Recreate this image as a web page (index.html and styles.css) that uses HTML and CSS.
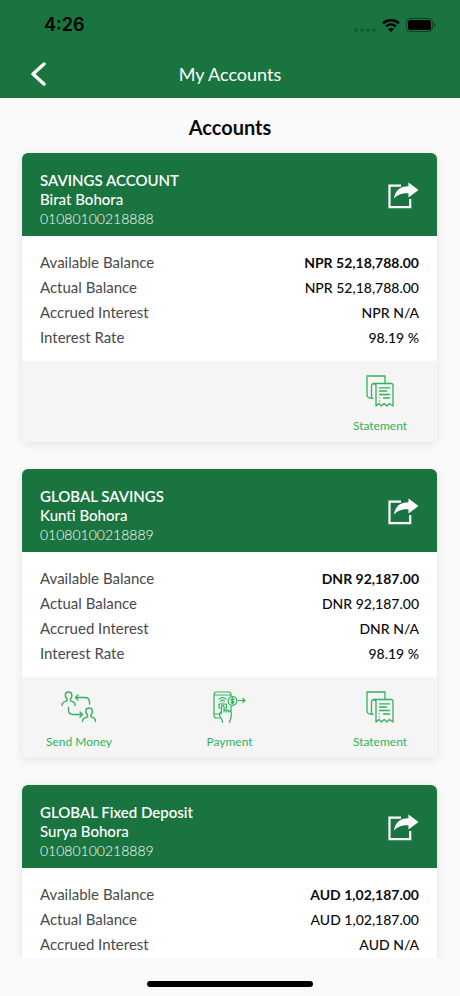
FILE: index.html
```html
<!DOCTYPE html>
<html lang="en">
<head>
<meta charset="utf-8">
<meta name="viewport" content="width=device-width, initial-scale=1">
<title>My Accounts</title>
<link rel="stylesheet" href="styles.css">
</head>
<body>
<svg class="sprite" aria-hidden="true">
  <symbol id="share" viewBox="0 0 32 28">
    <path d="M14 3.700H2.500v21.500h20.700V17" fill="none" stroke="currentColor" stroke-width="2.200"/>
    <path d="M7 16.500C8 8.500 13 4.500 21.500 4.300V0.500L31.500 8l-10 7.500v-4.200C15 11 11 12.500 7 16.500z" fill="currentColor"/>
  </symbol>
  <symbol id="statement" viewBox="0 0 28 33">
    <g fill="none" stroke="currentColor" stroke-width="1.300" stroke-linecap="round" stroke-linejoin="round">
      <path d="M5.500 23H4a3 3 0 0 1-3-3V1h18v7.500"/>
      <path d="M7 23.500a2 2 0 0 1-1.500-2V11a2.500 2.500 0 0 1 2.500-2.500"/>
      <path d="M7.500 8.500a2.500 2.500 0 0 1 2.500 2.500V31l3-2.500 2.500 2.500 2.700-2.500L21 31l2.500-2.500L27 31V10.500a2 2 0 0 0-2-2H7.500"/>
      <path d="M13.500 12.800h10M13.500 16h7M13.500 19.500h10M17.500 23h6M13.500 22.800v.1M13.500 25.800v.1"/>
    </g>
  </symbol>
  <symbol id="send" viewBox="0 0 36 32">
    <g fill="none" stroke="currentColor" stroke-width="1.400" stroke-linecap="round" stroke-linejoin="round">
      <path d="M1 14.500c0-3 1.500-3.600 5-4.700V8C3 4.500 4 1 7.500 1S12 4.500 9.500 8v1.800c3.500 1.100 4.500 1.700 4.500 4.700"/>
      <path d="M21.500 30.500c0-3 1.500-3.600 5-4.700V24c-3-3.500-2-7 1.500-7s4.500 3.500 2 7v1.800c3.500 1.100 4.500 1.700 4.500 4.700"/>
      <path d="M28.500 13v-2c0-3-1.500-4.500-4.500-4.500H14.500M17 4l-2.500 2.500L17 9"/>
      <path d="M7.500 16.500v2.500c0 3 1.500 4.500 4.500 4.500h9.500M19 21l2.500 2.500L19 26"/>
    </g>
  </symbol>
  <symbol id="pay" viewBox="0 0 33 34">
    <g fill="none" stroke="currentColor" stroke-width="1.200" stroke-linecap="round" stroke-linejoin="round">
      <path d="M7 27H3.500A2.500 2.500 0 0 1 1 24.500v-21A2.500 2.500 0 0 1 3.500 1h12A2.500 2.500 0 0 1 18 3.500V5M18 15v5M1 4h17M1 23h6"/>
      <path d="M6 8c2-1.700 5-1.700 7 0M7.500 10c1.300-1 2.700-1 4 0M9.500 11.500v.1"/>
      <path d="M7.500 17H6v-4h7.500v4H12"/>
      <path d="M8.500 22.500v-7c0-1.500 2.500-1.500 2.500 0V21v-1c0-1.500 2.300-1.500 2.300 0v1-1c0-1.500 2.300-1.500 2.300 0v1c0-1.500 2.600-1.500 2.600.5V26c0 2-1.700 3-1.700 5.500M8.500 20.500C6 22 6 24 7.500 26.500c1 1.800 2 2 2 5"/>
      <circle cx="19.500" cy="10" r="4.300"/>
      <path d="M21 8.500c-.7-1-3-.8-3 .4 0 1.500 3 .8 3 2.300 0 1.200-2.400 1.200-3 .2M19.500 7v6"/>
      <path d="M25.500 9.500H32M29.800 7.500l2.200 2-2.200 2"/>
    </g>
  </symbol>
</svg>

<header class="top">
  <div class="status">
    <span class="time">4:26</span>
    <span class="indicators">
      <svg class="cell" viewBox="0 0 22 4" fill="currentColor" aria-hidden="true"><circle cx="2" cy="2" r="1.700"/><circle cx="8" cy="2" r="1.700"/><circle cx="14" cy="2" r="1.700"/><circle cx="20" cy="2" r="1.700"/></svg>
      <svg class="wifi" viewBox="0 0 18 13" aria-hidden="true"><path d="M1 4.300c4.500-4 11.500-4 16 0M4 7.400c3-2.600 7-2.600 10 0" fill="none" stroke="currentColor" stroke-width="2.400"/><path d="M9 13 6 10c1.700-1.500 4.300-1.500 6 0z" fill="currentColor"/></svg>
      <svg class="battery" viewBox="0 0 30 14" aria-hidden="true"><rect x=".5" y=".5" width="26" height="13" rx="4" fill="none" stroke="currentColor" opacity=".45"/><rect x="2" y="2" width="23" height="10" rx="2.500" fill="currentColor"/><path d="M28 5c2 .6 2 3.400 0 4z" fill="currentColor" opacity=".5"/></svg>
    </span>
  </div>
  <nav class="nav">
    <button class="back" type="button" aria-label="Back"><svg viewBox="0 0 16 24" aria-hidden="true"><path d="M14 2 3 12l11 10" fill="none" stroke="currentColor" stroke-width="3.400" stroke-linecap="round" stroke-linejoin="round"/></svg></button>
    <h1>My Accounts</h1>
  </nav>
</header>

<main class="content">
  <h2>Accounts</h2>
  <div class="cards">
    <article class="card">
      <div class="card-head">
        <div><h3>SAVINGS ACCOUNT</h3><p class="owner">Birat Bohora</p><p class="number">01080100218888</p></div>
        <button class="share" type="button" aria-label="Share"><svg aria-hidden="true"><use href="#share"/></svg></button>
      </div>
      <dl class="rows">
        <div class="main-row"><dt>Available Balance</dt><dd>NPR 52,18,788.00</dd></div>
        <div><dt>Actual Balance</dt><dd>NPR 52,18,788.00</dd></div>
        <div><dt>Accrued Interest</dt><dd>NPR N/A</dd></div>
        <div><dt>Interest Rate</dt><dd>98.19 %</dd></div>
      </dl>
      <div class="actions actions-end">
        <button type="button"><svg class="i-statement" aria-hidden="true"><use href="#statement"/></svg>Statement</button>
      </div>
    </article>

    <article class="card">
      <div class="card-head">
        <div><h3>GLOBAL SAVINGS</h3><p class="owner">Kunti Bohora</p><p class="number">01080100218889</p></div>
        <button class="share" type="button" aria-label="Share"><svg aria-hidden="true"><use href="#share"/></svg></button>
      </div>
      <dl class="rows">
        <div class="main-row"><dt>Available Balance</dt><dd>DNR 92,187.00</dd></div>
        <div><dt>Actual Balance</dt><dd>DNR 92,187.00</dd></div>
        <div><dt>Accrued Interest</dt><dd>DNR N/A</dd></div>
        <div><dt>Interest Rate</dt><dd>98.19 %</dd></div>
      </dl>
      <div class="actions">
        <button type="button"><svg class="i-send" aria-hidden="true"><use href="#send"/></svg>Send Money</button>
        <button type="button"><svg class="i-pay" aria-hidden="true"><use href="#pay"/></svg>Payment</button>
        <button type="button"><svg class="i-statement" aria-hidden="true"><use href="#statement"/></svg>Statement</button>
      </div>
    </article>

    <article class="card">
      <div class="card-head">
        <div><h3>GLOBAL Fixed Deposit</h3><p class="owner">Surya Bohora</p><p class="number">01080100218889</p></div>
        <button class="share" type="button" aria-label="Share"><svg aria-hidden="true"><use href="#share"/></svg></button>
      </div>
      <dl class="rows">
        <div class="main-row"><dt>Available Balance</dt><dd>AUD 1,02,187.00</dd></div>
        <div><dt>Actual Balance</dt><dd>AUD 1,02,187.00</dd></div>
        <div><dt>Accrued Interest</dt><dd>AUD N/A</dd></div>
      </dl>
    </article>
  </div>
</main>

<footer class="home"><span></span></footer>
</body>
</html>
```
FILE: styles.css
```css
* { box-sizing: border-box; margin: 0; padding: 0; }

body {
  display: flex;
  flex-direction: column;
  height: 100vh;
  background: #fafafa;
  color: #0c0c0c;
  font-family: Lato, "Open Sans", sans-serif;
  font-size: 15px;
}

button { border: 0; background: none; color: inherit; font: inherit; cursor: pointer; }
svg { display: block; }
.sprite { position: absolute; width: 0; height: 0; }

.top { flex: none; background: #19743f; }

.status {
  display: flex;
  align-items: center;
  justify-content: space-between;
  height: 50px;
  padding: 0 24px 0 44px;
  color: #000;
}
.time { font: 600 18px/24px Inter, sans-serif; }
.indicators { display: flex; align-items: center; gap: 6px; }
.cell { width: 22px; height: 4px; margin-top: 9px; opacity: .25; }
.wifi { width: 18px; height: 13px; }
.battery { width: 30px; height: 14px; }

.nav {
  display: grid;
  grid-template-columns: 48px 1fr 48px;
  align-items: center;
  height: 48px;
  padding: 0 14px;
  color: #fff;
}
.back { justify-self: center; }
.back svg { width: 16px; height: 24px; }
.nav h1 { font-size: 18px; font-weight: 400; line-height: 24px; text-align: center; }

.content { flex: 1; min-height: 0; overflow: auto; scrollbar-width: none; padding: 16px 0 0; }
.content h2 { font-size: 20px; font-weight: 700; line-height: 26px; text-align: center; }

.cards { display: flex; flex-direction: column; gap: 27px; padding: 13px 23px 27px 22px; }
.card { border-radius: 6px; background: #fff; box-shadow: 0 2px 10px rgba(0, 0, 0, .1); }

.card-head {
  display: flex;
  align-items: center;
  justify-content: space-between;
  padding: 18px 18px 8px;
  border-radius: 6px 6px 0 0;
  background: #19743f;
  color: #fff;
  line-height: 19px;
}
.card-head h3 { font-size: 15px; font-weight: 600; }
.card-head .owner { font-weight: 500; }
.card-head .number { font-size: 14px; font-weight: 300; }
.share svg { width: 32px; height: 28px; }
.share { margin-bottom: 8px; }

.rows { padding: 14px 18px 11px; line-height: 25px; }
.rows div { display: flex; justify-content: space-between; }
.rows dt { color: #4a4a4a; }
.rows dd { font-size: 14px; font-weight: 500; }
.rows .main-row dd { font-weight: 700; }

.actions {
  display: flex;
  justify-content: space-between;
  padding: 14px 18px 8px;
  border-radius: 0 0 6px 6px;
  background: #f5f5f5;
  color: #2fb35a;
}
.actions-end { justify-content: flex-end; }
.actions button {
  display: flex;
  flex-direction: column;
  align-items: center;
  justify-content: space-between;
  width: 78px;
  height: 59px;
  font-size: 12px;
  line-height: 16px;
  white-space: nowrap;
}
.i-statement { width: 28px; height: 33px; }
.i-send { width: 36px; height: 32px; }
.i-pay { width: 33px; height: 34px; }

.home { flex: none; display: flex; justify-content: center; padding: 23px 0 9px; }
.home span { width: 36%; height: 6px; border-radius: 3px; background: #000; }
```
